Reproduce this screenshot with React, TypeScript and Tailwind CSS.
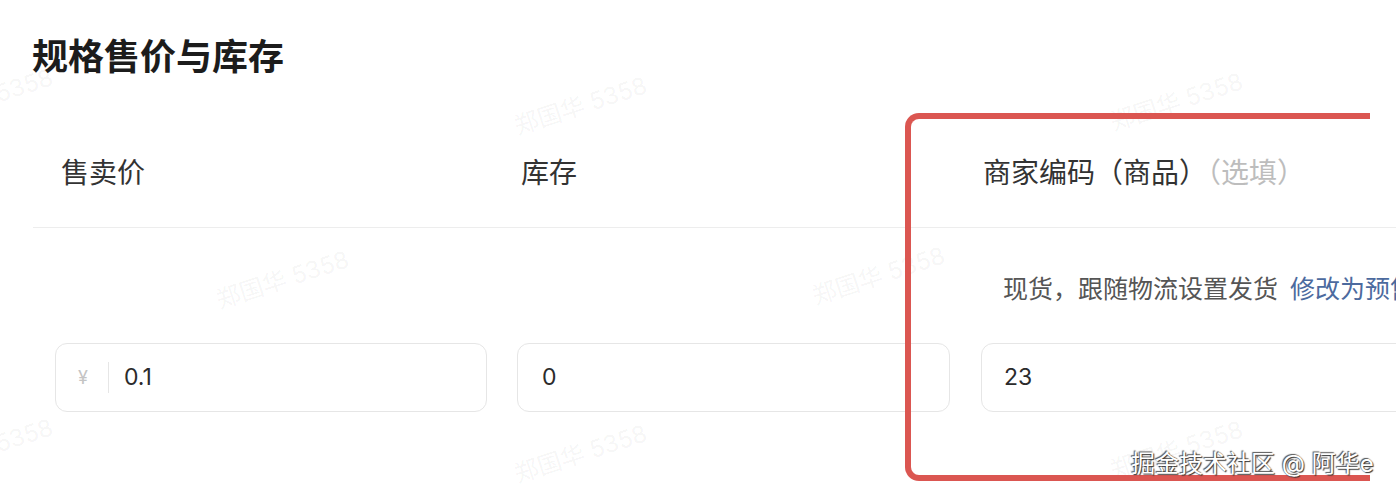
import React from 'react';

const marks = [
  { left: -82, top: 80, text: '郑国华 5358' },
  { left: 512, top: 88, text: '郑国华 5358' },
  { left: 1108, top: 84, text: '郑国华 5358' },
  { left: 214, top: 262, text: '郑国华 5358' },
  { left: 810, top: 258, text: '郑国华 5358' },
  { left: -82, top: 430, text: '郑国华 5358' },
  { left: 512, top: 436, text: '郑国华 5358' },
  { left: 1108, top: 432, text: '郑国华 5358' },
];

export default function App() {
  return (
    <div
      className="relative w-full h-[498px] overflow-hidden bg-white text-[#333]"
      style={{ fontFamily: '"Inter", "Noto Sans CJK SC", sans-serif' }}
    >
      {/* Title */}
      <h1 className="pt-[37px] pl-[32px] text-[36px] leading-[40px] font-bold text-[#1c1c1c]">
        规格售价与库存
      </h1>

      <div className="ml-[33px] w-[1389px]">
        {/* Header row */}
        <div className="grid grid-cols-[463px_463px_463px] pt-[82px] pb-[40px] border-b border-[#ededed] text-[28px] leading-[28px]">
          <div className="pl-[28px]">售卖价</div>
          <div className="pl-[25px]">库存</div>
          <div className="pl-[24px]">
            商家编码（商品）<span className="text-[#bdbdbd]">（选填）</span>
          </div>
        </div>

        {/* Shipping row */}
        <div className="grid grid-cols-[463px_463px_463px] pt-[45px]">
          <div />
          <div />
          <div className="pl-[44px] text-[25px] leading-[32px] text-[#555] whitespace-nowrap">
            现货，跟随物流设置发货
            <span className="ml-[12px] text-[#4c6a9e]">修改为预售</span>
          </div>
        </div>

        {/* Inputs */}
        <div className="grid grid-cols-[463px_463px_463px] pt-[38px]">
          <div className="pl-[22px]">
            <div className="flex items-center w-[432px] h-[69px] rounded-[12px] border border-[#e6e6e6] pl-[22px]">
              <span className="text-[18px] text-[#c4c4c4]">¥</span>
              <span className="ml-[20px] h-[31px] w-px bg-[#e6e6e6]" />
              <span className="ml-[15px] text-[23px] text-[#2b2b2b]">0.1</span>
            </div>
          </div>
          <div className="pl-[21px]">
            <div className="flex items-center w-[433px] h-[69px] rounded-[12px] border border-[#e6e6e6] pl-[24px]">
              <span className="text-[23px] text-[#2b2b2b]">0</span>
            </div>
          </div>
          <div className="pl-[22px]">
            <div className="flex items-center w-[440px] h-[69px] rounded-[12px] border border-[#e6e6e6] pl-[22px]">
              <span className="text-[23px] text-[#2b2b2b]">23</span>
            </div>
          </div>
        </div>
      </div>

      {/* Watermarks */}
      {marks.map((m, i) => (
        <span
          key={i}
          className="pointer-events-none absolute -rotate-[18deg] text-[24px] whitespace-nowrap text-[#000]/[0.05]"
          style={{ left: m.left, top: m.top }}
        >
          {m.text}
        </span>
      ))}

      {/* Red annotation box */}
      <div className="pointer-events-none absolute left-[905px] top-[113px] w-[465px] h-[368px] border-[6px] border-r-0 border-[#db5651] rounded-l-[14px]" />

      {/* Footer credit */}
      <div className="pointer-events-none absolute left-[1131px] top-[450px] text-[24px] leading-[28px] text-white whitespace-nowrap [text-shadow:1px_1px_1px_#333,-1px_-1px_1px_#555]">
        掘金技术社区 @ 阿华e
      </div>
    </div>
  );
}
